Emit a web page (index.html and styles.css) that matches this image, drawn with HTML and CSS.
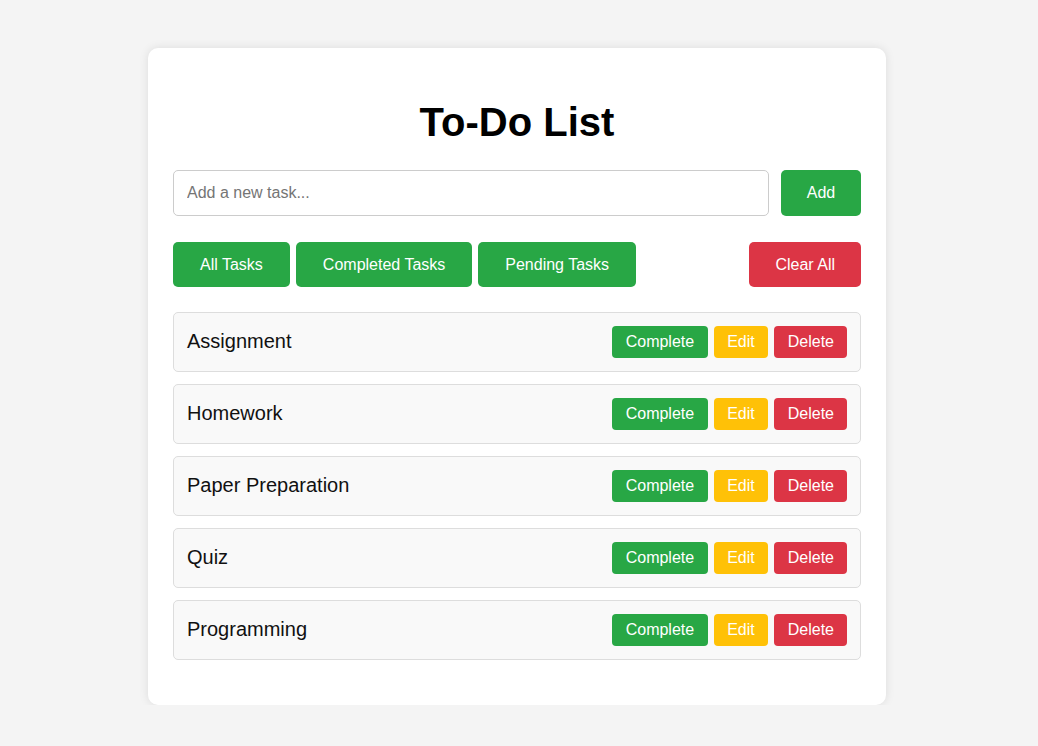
FILE: index.html
```html
<!DOCTYPE html>
<html lang="en">
<head>
<meta charset="UTF-8">
<title>To-Do List</title>
<link rel="stylesheet" href="styles.css">
</head>
<body>
<div class="container">
  <h1 class="title">To-Do List</h1>
  <div class="input-row">
    <input class="task-input" type="text" placeholder="Add a new task...">
    <button class="btn btn-add">Add</button>
  </div>
  <div class="filter-row">
    <button class="btn btn-filter">All Tasks</button>
    <button class="btn btn-filter">Completed Tasks</button>
    <button class="btn btn-filter">Pending Tasks</button>
    <button class="btn btn-clear">Clear All</button>
  </div>
  <ul class="task-list">
    <li class="task-item"><span class="task-text">Assignment</span><div class="actions"><button class="sbtn s-complete">Complete</button><button class="sbtn s-edit">Edit</button><button class="sbtn s-delete">Delete</button></div></li>
    <li class="task-item"><span class="task-text">Homework</span><div class="actions"><button class="sbtn s-complete">Complete</button><button class="sbtn s-edit">Edit</button><button class="sbtn s-delete">Delete</button></div></li>
    <li class="task-item"><span class="task-text">Paper Preparation</span><div class="actions"><button class="sbtn s-complete">Complete</button><button class="sbtn s-edit">Edit</button><button class="sbtn s-delete">Delete</button></div></li>
    <li class="task-item"><span class="task-text">Quiz</span><div class="actions"><button class="sbtn s-complete">Complete</button><button class="sbtn s-edit">Edit</button><button class="sbtn s-delete">Delete</button></div></li>
    <li class="task-item"><span class="task-text">Programming</span><div class="actions"><button class="sbtn s-complete">Complete</button><button class="sbtn s-edit">Edit</button><button class="sbtn s-delete">Delete</button></div></li>
  </ul>
</div>
</body>
</html>
```
FILE: styles.css
```css
* { box-sizing: border-box; }
body {
  margin: 0;
  padding: 48px 4px 0 0;
  background: #f4f4f4;
  font-family: "Liberation Sans", Arial, sans-serif;
}
.container {
  width: 738px;
  margin: 0 auto;
  background: #fff;
  border-radius: 10px;
  box-shadow: 0 0 10px rgba(0,0,0,0.1);
  padding: 25px;
}
.title {
  margin: 26px 0 0;
  height: 47px;
  font-size: 40px;
  line-height: 46px;
  text-align: center;
  color: #000;
  font-weight: bold;
}
.input-row {
  margin-top: 24px;
  display: flex;
  gap: 12px;
}
.task-input {
  flex: 1;
  height: 46px;
  border: 1px solid #ccc;
  border-radius: 5px;
  padding: 0 13px;
  font-size: 16px;
  font-family: "Liberation Sans", Arial, sans-serif;
  color: #333;
  outline: none;
}
.task-input::placeholder { color: #757575; }
.btn {
  border: none;
  border-radius: 5px;
  color: #fff;
  font-size: 16px;
  font-family: "Liberation Sans", Arial, sans-serif;
  padding: 0 27px;
  cursor: pointer;
}
.btn-add {
  width: 80px;
  height: 46px;
  padding: 0;
  background: #28a745;
}
.filter-row {
  margin-top: 26px;
  display: flex;
  gap: 6px;
}
.btn-filter {
  height: 45px;
  background: #28a745;
}
.btn-clear {
  height: 45px;
  padding: 0 26px;
  margin-left: auto;
  background: #dc3545;
}
.task-list {
  list-style: none;
  margin: 25px 0 20px;
  padding: 0;
  display: flex;
  flex-direction: column;
  gap: 12px;
}
.task-item {
  display: flex;
  align-items: center;
  justify-content: space-between;
  padding: 13px;
  background: #f9f9f9;
  border: 1px solid #ddd;
  border-radius: 5px;
}
.task-text {
  font-size: 20px;
  color: #111;
  margin-top: -1px;
}
.actions {
  display: flex;
  gap: 6px;
}
.sbtn {
  height: 32px;
  border: none;
  border-radius: 4px;
  padding: 0 13px;
  color: #fff;
  font-size: 16px;
  font-family: "Liberation Sans", Arial, sans-serif;
  cursor: pointer;
}
.s-complete { background: #28a745; padding: 0 14px; }
.s-edit { background: #ffc107; }
.s-delete { background: #dc3545; padding: 0 13px 0 14px; }
```
